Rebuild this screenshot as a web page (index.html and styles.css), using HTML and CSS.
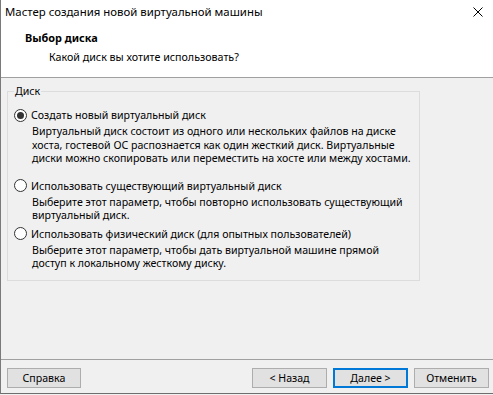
FILE: index.html
```html
<!DOCTYPE html>
<html lang="ru">
<head>
<meta charset="utf-8">
<title>Мастер создания новой виртуальной машины</title>
<link rel="stylesheet" href="styles.css">
</head>
<body>
<div class="window">
  <header class="header">
    <div class="titlebar">
      <span class="title">Мастер создания новой виртуальной машины</span>
      <svg class="close" width="10" height="10" viewBox="0 0 10 10"><path d="M0.5 0.5 L9.5 9.5 M9.5 0.5 L0.5 9.5" stroke="#000" stroke-width="1" fill="none"/></svg>
    </div>
    <div class="page-title">Выбор диска</div>
    <div class="page-sub">Какой диск вы хотите использовать?</div>
  </header>
  <main class="content">
    <fieldset class="group">
      <legend class="group-label">Диск</legend>
      <div class="option option-first">
        <div class="opt-label"><span class="radio checked"></span>Создать новый виртуальный диск</div>
        <div class="desc">Виртуальный диск состоит из одного или нескольких файлов на диске<br>хоста, гостевой ОС распознается как один жесткий диск. Виртуальные<br>диски можно скопировать или переместить на хосте или между хостами.</div>
      </div>
      <div class="option option-second">
        <div class="opt-label"><span class="radio"></span>Использовать существующий виртуальный диск</div>
        <div class="desc">Выберите этот параметр, чтобы повторно использовать существующий<br>виртуальный диск.</div>
      </div>
      <div class="option option-third">
        <div class="opt-label"><span class="radio"></span>Использовать физический диск (для опытных пользователей)</div>
        <div class="desc">Выберите этот параметр, чтобы дать виртуальной машине прямой<br>доступ к локальному жесткому диску.</div>
      </div>
    </fieldset>
  </main>
  <footer class="footer">
    <button class="btn btn-help">Справка</button>
    <div class="nav">
      <button class="btn">&lt; Назад</button>
      <button class="btn btn-default">Далее &gt;</button>
      <button class="btn">Отменить</button>
    </div>
  </footer>
</div>
</body>
</html>
```
FILE: styles.css
```css
* { box-sizing: border-box; }
html, body {
  margin: 0;
  padding: 0;
  width: 493px;
  height: 395px;
  background: #f0f0f0;
  overflow: hidden;
}
body {
  font-family: "Noto Sans", "Open Sans", sans-serif;
  font-size: 10.6px;
  color: #000;
}
.window {
  width: 493px;
  height: 394px;
  border-left: 1px solid #7a7a7a;
  border-bottom: 1px solid #6e6e6e;
  display: flex;
  flex-direction: column;
}
.header {
  height: 78px;
  background: #fff;
  border-bottom: 1px solid #a0a0a0;
  flex: none;
}
.titlebar {
  display: flex;
  justify-content: space-between;
  align-items: center;
  padding: 4px 10px 0 4px;
  height: 20px;
  line-height: 16px;
}
.title { font-size: 11.4px; }
.close { display: block; }
.page-title {
  margin-top: 10px;
  padding-left: 24px;
  font-weight: bold;
  font-size: 10.9px;
  line-height: 16px;
}
.page-sub {
  margin-top: 3px;
  padding-left: 48px;
  font-size: 10.7px;
  line-height: 16px;
}
.content {
  flex: 1;
  padding: 6px 0 0 6px;
}
.group {
  margin: 0;
  width: 413px;
  border: 1px solid #dcdcdc;
  padding: 0 0 9px 6px;
}
.group-label {
  padding: 0 1px;
  line-height: 15px;
}
.option-first { margin-top: 8px; }
.option-second { margin-top: 12px; }
.option-third { margin-top: 3px; }
.opt-label {
  display: flex;
  align-items: center;
  line-height: 16px;
  white-space: nowrap;
}
.radio {
  width: 13px;
  height: 13px;
  border: 1px solid #333;
  border-radius: 50%;
  background: #fff;
  margin-right: 4px;
  flex: none;
  display: flex;
  align-items: center;
  justify-content: center;
}
.radio.checked::after {
  content: "";
  width: 7px;
  height: 7px;
  border-radius: 50%;
  background: #333;
}
.desc {
  margin-top: 2px;
  padding-left: 18px;
  line-height: 13.5px;
  white-space: nowrap;
}
.footer {
  flex: none;
  height: 34px;
  border-top: 1px solid #a0a0a0;
  padding: 8px 4px 0 6px;
  display: flex;
  justify-content: space-between;
  align-items: flex-start;
}
.nav {
  display: flex;
  gap: 6px;
}
.btn {
  width: 75px;
  height: 20px;
  margin: 0;
  padding: 0;
  background: #e1e1e1;
  border: 1px solid #adadad;
  font-family: inherit;
  font-size: 10.6px;
  color: #000;
  line-height: 16px;
}
.btn-help { width: 74px; }
.btn-default {
  border: 2px solid #0078d7;
}
```
